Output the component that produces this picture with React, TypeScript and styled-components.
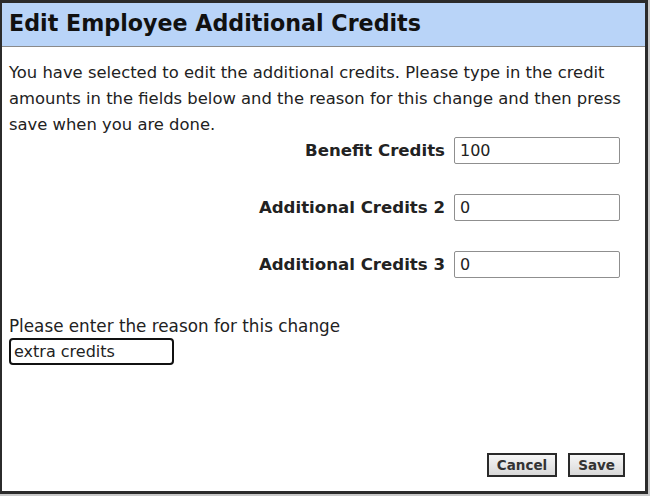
import { useEffect, useRef } from "react";
import styled, { createGlobalStyle } from "styled-components";

const GlobalStyle = createGlobalStyle`
  html, body {
    margin: 0;
    padding: 0;
    background: #c9c9c9;
  }
  body {
    font-family: "DejaVu Sans", Verdana, sans-serif;
  }
`;

const fields = [
  { label: "Benefit Credits", value: "100" },
  { label: "Additional Credits 2", value: "0" },
  { label: "Additional Credits 3", value: "0" },
];

export default function App() {
  const reasonRef = useRef<HTMLInputElement>(null);

  // put the caret at the end of the reason, like the user just typed it
  useEffect(() => {
    const el = reasonRef.current;
    if (el) {
      el.focus();
      el.setSelectionRange(el.value.length, el.value.length);
    }
  }, []);

  return (
    <>
      <GlobalStyle />
      <Dialog>
        <TitleBar>Edit Employee Additional Credits</TitleBar>
        <Body>
          <Intro>
            You have selected to edit the additional credits. Please type in
            the credit amounts in the fields below and the reason for this
            change and then press save when you are done.
          </Intro>
          <Fields>
            {fields.map((f) => (
              <FieldRow key={f.label}>
                <FieldLabel>{f.label}</FieldLabel>
                <CreditInput defaultValue={f.value} />
              </FieldRow>
            ))}
          </Fields>
          <ReasonLabel>Please enter the reason for this change</ReasonLabel>
          <ReasonInput ref={reasonRef} defaultValue="extra credits" />
          <Buttons>
            <Button>Cancel</Button>
            <Button>Save</Button>
          </Buttons>
        </Body>
      </Dialog>
    </>
  );
}

const Dialog = styled.div`
  box-sizing: border-box;
  width: 648px;
  height: 494px;
  border-style: solid;
  border-color: #2b2b2b;
  border-width: 3px 3px 3px 2px;
  background: #fff;
  display: flex;
  flex-direction: column;
`;

const TitleBar = styled.div`
  box-sizing: border-box;
  height: 44px;
  background: #b9d4f8;
  border-bottom: 1px solid #8a8a8a;
  padding: 7px 0 0 7px;
  font-size: 22.2px;
  font-weight: bold;
  color: #111;
  white-space: nowrap;
`;

const Body = styled.div`
  flex: 1;
  display: flex;
  flex-direction: column;
  padding: 13px 7px 0 7px;
  color: #222;
`;

const Intro = styled.p`
  margin: 0;
  font-size: 16.4px;
  line-height: 26px;
  width: 628px;
`;

const Fields = styled.div`
  display: flex;
  flex-direction: column;
  gap: 30px;
  margin-top: -1px;
  padding-right: 18px;
`;

const FieldRow = styled.div`
  display: flex;
  justify-content: flex-end;
  align-items: center;
  gap: 9px;
`;

const FieldLabel = styled.label`
  font-size: 16.6px;
  font-weight: bold;
  color: #222;
`;

const CreditInput = styled.input`
  box-sizing: border-box;
  width: 166px;
  height: 27px;
  border: 1px solid #8f8f8f;
  border-radius: 2px;
  padding: 0 5px;
  font-family: "DejaVu Sans", Verdana, sans-serif;
  font-size: 16px;
  color: #222;
`;

const ReasonLabel = styled.div`
  margin-top: 38px;
  font-size: 16.8px;
  color: #222;
`;

const ReasonInput = styled.input`
  box-sizing: border-box;
  width: 165px;
  height: 27px;
  margin-top: 2px;
  border: 2px solid #111;
  border-radius: 4px;
  padding: 0 3px;
  font-family: "DejaVu Sans", Verdana, sans-serif;
  font-size: 16px;
  color: #222;
  caret-color: #000;
  outline: none;
`;

const Buttons = styled.div`
  margin-top: auto;
  margin-bottom: 14px;
  display: flex;
  justify-content: flex-end;
  gap: 11px;
  padding-right: 13px;
`;

const Button = styled.button`
  box-sizing: border-box;
  height: 24px;
  padding: 0 8px;
  border: 2px solid #2a2a2a;
  border-radius: 0;
  background: linear-gradient(#f6f6f6, #d9d9d9);
  font-family: "DejaVu Sans", Verdana, sans-serif;
  font-size: 13.5px;
  font-weight: bold;
  color: #333;
`;
